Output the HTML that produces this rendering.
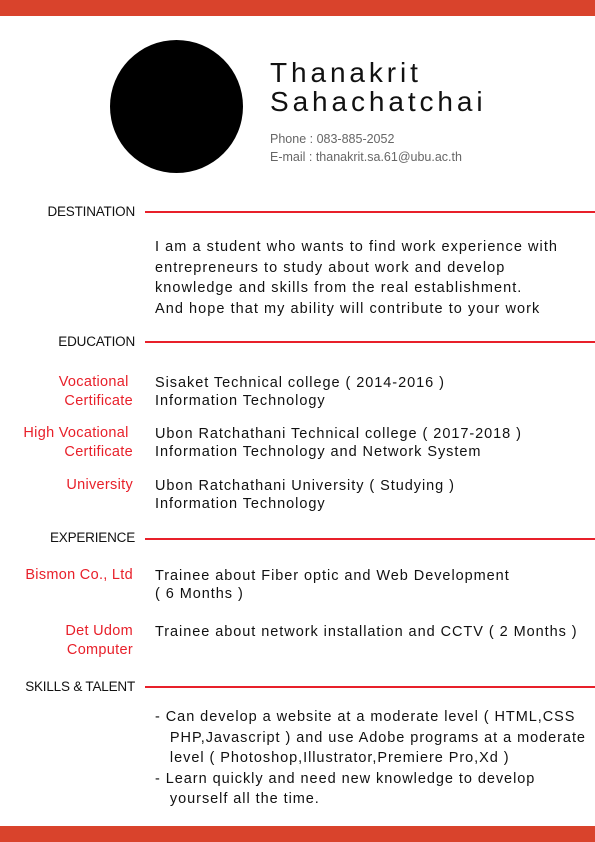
<!DOCTYPE html>
<html><head><meta charset="utf-8"><style>
body{margin:0;width:595px;height:842px;position:relative;background:#fff;font-family:"Liberation Sans",sans-serif;overflow:hidden}
.bar{position:absolute;left:0;width:595px;height:16px;background:#d9432c}
.a{position:absolute;white-space:nowrap}
.h{font-size:13.5px;color:#111;text-align:right;right:460px;letter-spacing:-0.2px}
.ln{position:absolute;left:145px;right:0;height:2px;background:#e8202a}
.t{font-size:14.5px;color:#111;left:155px;line-height:18px;letter-spacing:0.95px}
.r{font-size:14.5px;color:#e8202a;right:462px;text-align:right;line-height:19px;letter-spacing:0.3px}
</style></head><body>
<div class="bar" style="top:0"></div>
<div class="bar" style="top:826px"></div>
<div style="position:absolute;left:110px;top:40px;width:133px;height:133px;border-radius:50%;background:#000"></div>
<div class="a" style="left:270px;top:58px;font-size:28px;line-height:29px;letter-spacing:3.9px;color:#111">Thanakrit<br>Sahachatchai</div>
<div class="a" style="left:270px;top:130px;font-size:12.5px;line-height:18px;color:#666">Phone : 083-885-2052<br>E-mail : thanakrit.sa.61@ubu.ac.th</div>

<div class="a h" style="top:204px">DESTINATION</div><div class="ln" style="top:211px"></div>
<div class="a t" style="top:237px;line-height:20.5px;letter-spacing:1.05px">I am a student who wants to find work experience with<br>entrepreneurs to study about work and develop<br>knowledge and skills from the real establishment.<br>And hope that my ability will contribute to your work</div>

<div class="a h" style="top:334px">EDUCATION</div><div class="ln" style="top:341px"></div>
<div class="a r" style="top:373px">Vocational&nbsp;<br>Certificate</div>
<div class="a t" style="top:374px">Sisaket Technical college ( 2014-2016 )<br>Information Technology</div>
<div class="a r" style="top:424px">High Vocational&nbsp;<br>Certificate</div>
<div class="a t" style="top:425px">Ubon Ratchathani Technical college ( 2017-2018 )<br>Information Technology and Network System</div>
<div class="a r" style="top:476px">University</div>
<div class="a t" style="top:477px">Ubon Ratchathani University ( Studying )<br>Information Technology</div>

<div class="a h" style="top:530px">EXPERIENCE</div><div class="ln" style="top:538px"></div>
<div class="a r" style="top:566px">Bismon Co., Ltd</div>
<div class="a t" style="top:567px">Trainee about Fiber optic and Web Development<br>( 6 Months )</div>
<div class="a r" style="top:622px">Det Udom<br>Computer</div>
<div class="a t" style="top:623px">Trainee about network installation and CCTV ( 2 Months )</div>

<div class="a h" style="top:679px">SKILLS &amp; TALENT</div><div class="ln" style="top:686px"></div>
<div class="a t" style="top:707px;line-height:20.5px">- Can develop a website at a moderate level ( HTML,CSS<br>&nbsp;&nbsp;&nbsp;PHP,Javascript ) and use Adobe programs at a moderate<br>&nbsp;&nbsp;&nbsp;level ( Photoshop,Illustrator,Premiere Pro,Xd )<br>- Learn quickly and need new knowledge to develop<br>&nbsp;&nbsp;&nbsp;yourself all the time.</div>
</body></html>
